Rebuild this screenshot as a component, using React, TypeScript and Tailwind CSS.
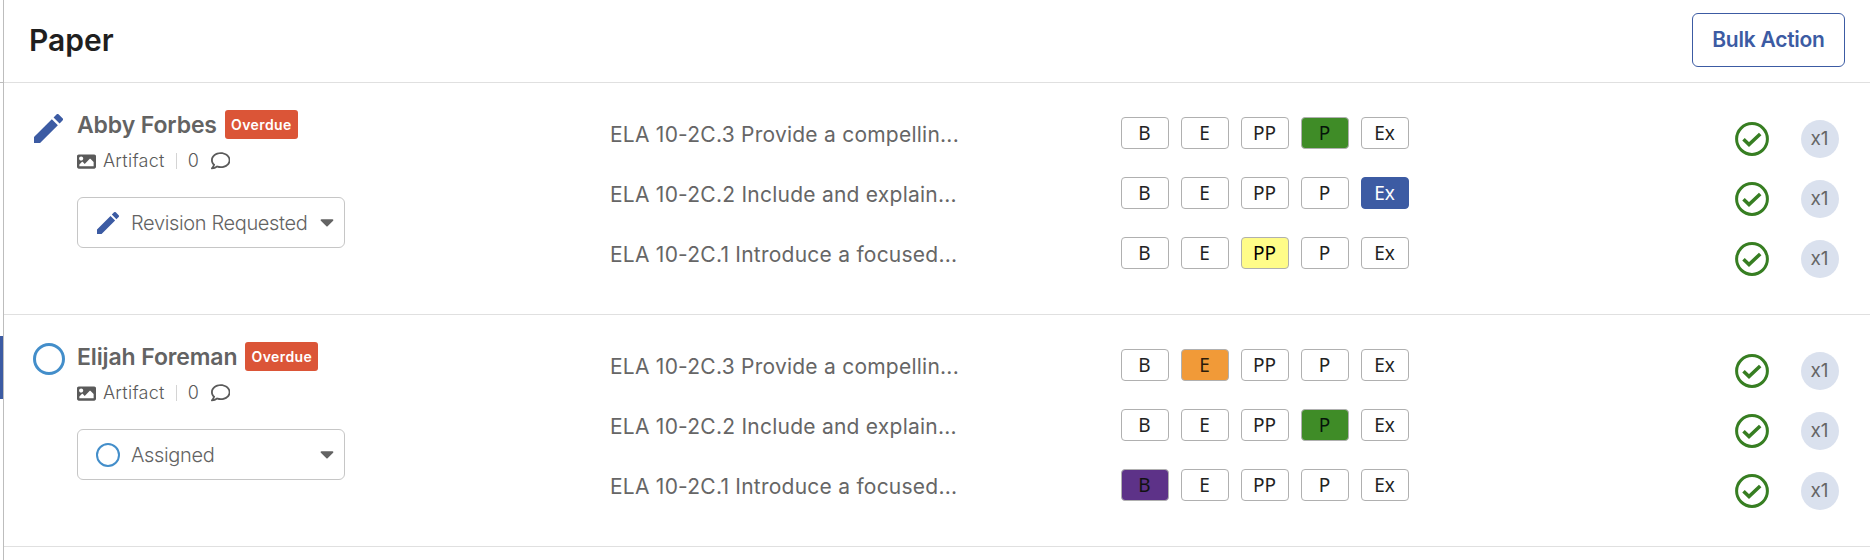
import { FaCaretDown, FaImage, FaRegComment } from "react-icons/fa"

const LEVELS = ["B", "E", "PP", "P", "Ex"]

const LEVEL_STYLES: Record<string, string> = {
  B: "bg-[#5d3288] text-[#111] border-[#b0b0b0]",
  E: "bg-[#f19a38] text-[#2b1b0a] border-[#b0b0b0]",
  PP: "bg-[#fffc88] text-black border-[#b0b0b0]",
  P: "bg-[#3f8c27] text-[#06140a] border-[#b0b0b0]",
  Ex: "bg-[#3c5ba3] text-white border-[#3c5ba3]",
}

type Student = {
  name: string
  status: "revision" | "assigned"
  criteria: { title: string; level: string }[]
}

const students: Student[] = [
  {
    name: "Abby Forbes",
    status: "revision",
    criteria: [
      { title: "ELA 10-2C.3 Provide a compellin...", level: "P" },
      { title: "ELA 10-2C.2 Include and explain...", level: "Ex" },
      { title: "ELA 10-2C.1 Introduce a focused...", level: "PP" },
    ],
  },
  {
    name: "Elijah Foreman",
    status: "assigned",
    criteria: [
      { title: "ELA 10-2C.3 Provide a compellin...", level: "E" },
      { title: "ELA 10-2C.2 Include and explain...", level: "P" },
      { title: "ELA 10-2C.1 Introduce a focused...", level: "B" },
    ],
  },
]

const PencilIcon = ({ className }: { className: string }) => (
  <svg viewBox="3 3 18 18" className={className} fill="#3c5ba3">
    <path d="M3 17.25V21h3.75L17.81 9.94l-3.75-3.75L3 17.25zM20.71 7.04a1 1 0 0 0 0-1.41l-2.34-2.34a1 1 0 0 0-1.41 0l-1.83 1.83 3.75 3.75 1.83-1.83z" />
  </svg>
)

const CheckIcon = () => (
  <svg viewBox="0 0 34 34" className="size-[34px]" fill="none" stroke="#377e22">
    <circle cx="17" cy="17" r="15.4" strokeWidth="3" />
    <path d="M8.5 17.3L14 22.6L25.2 12" strokeWidth="3.6" />
  </svg>
)

const StudentInfo = ({ student }: { student: Student }) => {
  const revision = student.status === "revision"
  return (
    <div className="flex w-[578px] pl-[29px] pt-[27px]">
      <div className="w-11 pt-px">
        {revision ? (
          <PencilIcon className="ml-px mt-[3px] size-[29px]" />
        ) : (
          <div className="size-8 rounded-full border-[3px] border-[#438eca]" />
        )}
      </div>
      <div>
        <div className="flex h-[29px] items-center">
          <h2 className="pt-0.5 text-[23px] font-semibold tracking-[-0.12px] text-[#636363]">
            {student.name}
          </h2>
          <span className="ml-2 flex h-[29px] w-[73px] items-center justify-center rounded-[3px] bg-[#db5537] pt-px text-sm font-semibold tracking-[0.4px] text-white">
            Overdue
          </span>
        </div>
        <div className="mt-[9px] flex h-[26px] items-center text-lg font-light text-[#5a5a5a]">
          <FaImage className="size-[19px]" />
          <span className="ml-[7px] tracking-[0.25px]">Artifact</span>
          <span className="ml-[11px] h-4 w-px bg-[#d4d4d4]" />
          <span className="ml-[11px]">0</span>
          <FaRegComment className="ml-3 size-[19.5px]" />
        </div>
        <div className="mt-[23px] flex h-[51px] w-[268px] items-center rounded-md border border-[#c6c6c6] pl-[19px] pr-1.5 text-[#636363]">
          {revision ? (
            <PencilIcon className="size-[22px]" />
          ) : (
            <div className="-ml-px size-6 rounded-full border-[2.5px] border-[#438eca]" />
          )}
          <span
            className={`pt-px text-xl font-light tracking-[-0.36px] ${
              revision ? "ml-3" : "ml-[11px]"
            }`}
          >
            {revision ? "Revision Requested" : "Assigned"}
          </span>
          <FaCaretDown className="-mt-0.5 ml-auto size-[22px]" />
        </div>
      </div>
    </div>
  )
}

const StudentRow = ({ student }: { student: Student }) => (
  <div className="flex h-[232px] border-b border-[#e0e0e0]">
    <StudentInfo student={student} />
    <div className="flex-1 pl-7 pt-[34px]">
      {student.criteria.map((item) => (
        <div key={item.title} className="flex h-[60px] items-start">
          <div className="w-[511px] pt-0.5 text-[21px] leading-8 tracking-[0.24px] text-[#666]">
            {item.title}
          </div>
          <div className="flex gap-3 font-['Noto_Sans',sans-serif]">
            {LEVELS.map((level) => (
              <button
                key={level}
                className={`flex h-8 w-12 items-center justify-center rounded border pr-px text-[19px] ${
                  level === item.level
                    ? LEVEL_STYLES[level]
                    : "border-[#b0b0b0] bg-white text-[#222]"
                }`}
              >
                {level}
              </button>
            ))}
          </div>
          <div className="ml-auto flex items-center gap-8 pr-[31px] pt-[3px]">
            <CheckIcon />
            <span className="flex size-[38px] items-center justify-center rounded-full bg-[#dae1ee] pr-px pt-px text-[19px] text-[#666]">
              x1
            </span>
          </div>
        </div>
      ))}
    </div>
  </div>
)

export default function App() {
  return (
    <div className="flex h-[560px] overflow-hidden bg-white font-['Inter',sans-serif]">
      <div className="w-[3px]">
        <div className="h-[83px] border-b border-[#bdbdbd]" />
        <div className="mt-[253px] h-[63px] bg-[#3c5ba3]" />
      </div>
      <main className="flex-1 border-l border-[#bdbdbd]">
        <header className="flex h-[83px] items-center justify-between border-b border-[#e0e0e0] px-[25px] pb-0.5">
          <h1 className="text-[30px] font-semibold text-[#1f1f1f]">Paper</h1>
          <button className="h-[54px] w-[153px] rounded-md border border-[#3c5ba3] text-[21px] font-semibold tracking-[-0.25px] text-[#3c5ba3]">
            Bulk Action
          </button>
        </header>
        {students.map((student) => (
          <StudentRow key={student.name} student={student} />
        ))}
      </main>
    </div>
  )
}
